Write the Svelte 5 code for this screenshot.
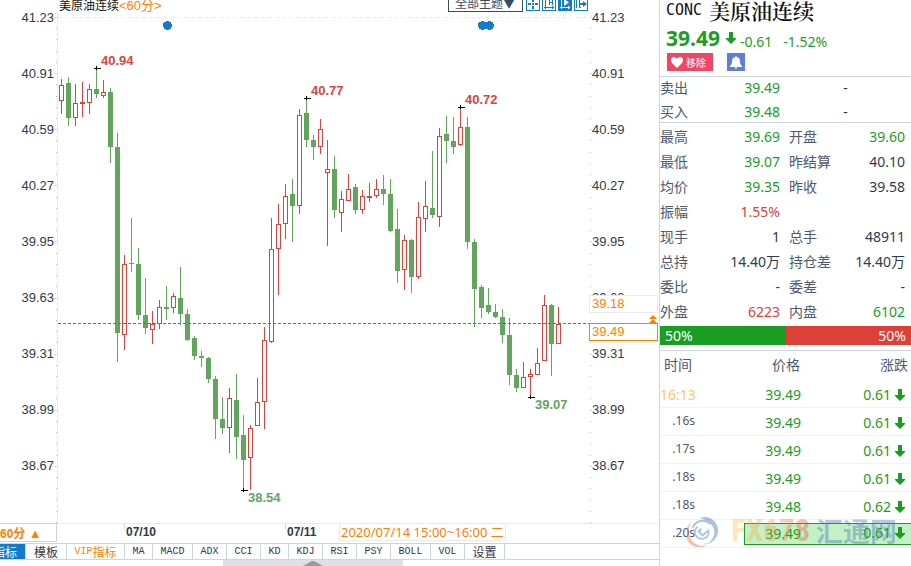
<script lang="ts">
/**
 * Futures quote screen: hourly candle chart on the left,
 * quote panel with the latest trades on the right.
 */

interface Mark {
  x: number;
  y: number;
  text: string;
  tx: number;
  ty: number;
  up: boolean;
}

const PRICES = ['41.23', '40.91', '40.59', '40.27', '39.95', '39.63', '39.31', '38.99', '38.67'];

// Chart space: x runs from 54 to 592, y from 12 to 523
const LEFT = 54;
const SPAN = 538;
const FIRST = 61;
const STEP = 7;

// [high, body top, body bottom, low, rising]
const CANDLES: number[][] = [
  [79, 85, 101, 114, 1], [77, 83, 118, 126, 0], [84, 103, 118, 126, 1], [82, 102, 104, 117, 1],
  [84, 89, 103, 114, 1], [68, 89, 94, 98, 0], [80, 92, 96, 98, 1], [88, 92, 147, 163, 0],
  [133, 147, 333, 362, 0], [255, 264, 335, 350, 1], [218, 263, 264, 272, 0], [248, 264, 315, 320, 0],
  [278, 315, 328, 334, 0], [311, 324, 330, 344, 1], [300, 307, 324, 329, 1], [286, 307, 309, 320, 0],
  [293, 296, 308, 313, 1], [267, 298, 314, 325, 0], [309, 314, 340, 341, 0], [336, 338, 356, 360, 0],
  [351, 356, 358, 367, 0], [357, 358, 379, 383, 0], [376, 379, 419, 439, 0], [397, 419, 428, 434, 0],
  [388, 398, 428, 453, 1], [374, 400, 437, 459, 0], [415, 435, 460, 490, 0], [425, 428, 458, 490, 1],
  [378, 402, 426, 426, 1], [327, 340, 402, 429, 1], [218, 249, 342, 343, 1], [204, 224, 249, 295, 1],
  [184, 196, 224, 239, 1], [179, 194, 206, 242, 0], [109, 115, 206, 214, 1], [98, 113, 140, 147, 0],
  [135, 140, 147, 160, 0], [119, 129, 147, 154, 1], [140, 169, 173, 246, 1], [156, 169, 210, 218, 0],
  [191, 199, 213, 232, 1], [174, 189, 201, 201, 1], [184, 187, 210, 214, 0], [190, 196, 210, 214, 1],
  [183, 196, 198, 202, 1], [179, 189, 196, 198, 1], [175, 189, 194, 205, 0], [179, 194, 231, 232, 0],
  [209, 229, 271, 283, 0], [235, 240, 270, 290, 1], [239, 240, 277, 293, 0], [202, 217, 277, 279, 1],
  [181, 206, 219, 232, 1], [151, 208, 215, 218, 0], [128, 136, 217, 227, 1], [116, 134, 141, 163, 0],
  [117, 141, 147, 154, 0], [107, 127, 145, 146, 1], [117, 127, 242, 249, 0], [239, 242, 289, 327, 0],
  [285, 287, 308, 318, 0], [288, 305, 312, 314, 0], [304, 312, 317, 318, 0], [309, 317, 335, 343, 0],
  [318, 335, 375, 385, 0], [369, 375, 388, 392, 0], [362, 377, 388, 388, 1], [369, 374, 377, 397, 1],
  [348, 363, 375, 375, 1], [295, 305, 361, 361, 1], [304, 305, 344, 376, 0], [307, 324, 344, 344, 1]
];

const MARKS: Mark[] = [
  { x: 96, y: 68, text: '40.94', tx: 101, ty: 65, up: true },
  { x: 306, y: 98, text: '40.77', tx: 311, ty: 95, up: true },
  { x: 460, y: 107, text: '40.72', tx: 465, ty: 104, up: true },
  { x: 243, y: 490, text: '38.54', tx: 248, ty: 502, up: false },
  { x: 530, y: 397, text: '39.07', tx: 535, ty: 409, up: false }
];

const NEWS = [167, 482, 489];

const DATES = [
  { x: 124, label: '07/10' },
  { x: 285, label: '07/11' }
];

const TABS = [
  { label: 'MA', w: 28 }, { label: 'MACD', w: 40 }, { label: 'ADX', w: 34 }, { label: 'CCI', w: 34 },
  { label: 'KD', w: 28 }, { label: 'KDJ', w: 34 }, { label: 'RSI', w: 34 }, { label: 'PSY', w: 34 },
  { label: 'BOLL', w: 40 }, { label: 'VOL', w: 34 }
];

const QUOTES = [
  ['最高', '39.69', 'down', '开盘', '39.60', 'down'],
  ['最低', '39.07', 'down', '昨结算', '40.10', ''],
  ['均价', '39.35', 'down', '昨收', '39.58', ''],
  ['振幅', '1.55%', 'up', '', '', ''],
  ['现手', '1', '', '总手', '48911', ''],
  ['总持', '14.40万', '', '持仓差', '14.40万', ''],
  ['委比', '-', '', '委差', '-', ''],
  ['外盘', '6223', 'up', '内盘', '6102', 'down']
];

const TRADES = [
  { time: '16:13', price: '39.49', change: '0.61' },
  { time: '.16s', price: '39.49', change: '0.61' },
  { time: '.17s', price: '39.49', change: '0.61' },
  { time: '.18s', price: '39.49', change: '0.61' },
  { time: '.18s', price: '39.48', change: '0.62' },
  { time: '.20s', price: '39.49', change: '0.61' }
];

const minorTicks = Array.from({ length: 46 }, (_, i) => Math.round(17 + i * 11.22));

let plotWidth = $state(SPAN);

// Spread the chart over whatever width the plot gets
const px = $derived((x: number) => Math.round(((x - LEFT) * plotWidth) / SPAN));
</script>

{#snippet downArrow()}
  <svg class="arrow" viewBox="0 0 10 12" aria-hidden="true">
    <path d="M3 0h4v6h3v1L5 12 0 7V6h3z" fill="#1a9d23" />
  </svg>
{/snippet}

<div class="screen">
  <main class="chart">
    <!-- Title and tools -->
    <header class="chart-head">
      <h1 class="chart-title">美原油连续<span>&lt;60分&gt;</span></h1>
      <select class="theme" aria-label="主题">
        <option>全部主题▼</option>
      </select>
      <div class="tools">
        <button type="button" aria-label="十字光标">
          <svg viewBox="0 0 12 12"><path d="M6 1v3M6 8v3M1 6h3M8 6h3M5 6h2" /></svg>
        </button>
        <button type="button" aria-label="缩放">
          <svg viewBox="0 0 12 12"><path class="thin" d="M2.500 1v10M1 9.500h10M6.500 1v6M9.500 1v6M6.500 4.500h3M9 8l2 1.500L9 11" /></svg>
        </button>
        <button type="button" class="on" aria-label="播放">
          <svg viewBox="0 0 12 12"><path class="thin" d="M2.500 1v10M1 9.500h10M9 8l2 1.500L9 11" /><path class="solid" d="M5 1l5 3.500L5 8z" /></svg>
        </button>
        <button type="button" aria-label="右移">
          <svg viewBox="0 0 12 12"><path class="thin" d="M1.500 1v9M6 1.500H4.500v8H6" /><path d="M4 6h5" /><path class="solid" d="M8 3l4 3-4 3z" /></svg>
        </button>
      </div>
    </header>

    <!-- Plot between its two price axes -->
    <div class="plot-row">
      <div class="axis axis-left">
        {#each PRICES as price}<span>{price}</span>{/each}
      </div>
      <div class="plot" bind:clientWidth={plotWidth}>
        <svg width={plotWidth} height="511" viewBox="0 12 {plotWidth} 511" shape-rendering="crispEdges">
          <rect x={px(57)} y="12" width="1" height="511" fill="#e6ebef" />
          {#each minorTicks as y, i}
            {#if i % 5 === 0 && i < 41}
              <rect x="0" {y} width="3" height="1" fill="#cbd5de" />
              <rect x={px(590)} {y} width="2" height="1" fill="#cbd5de" />
            {:else}
              <rect x="2" {y} width="1" height="1" fill="#b5bfca" />
              <rect x={px(590)} {y} width="1" height="1" fill="#b5bfca" />
            {/if}
          {/each}
          <line x1="4" y1="17.5" x2={px(588)} y2="17.5" stroke="#ececec" stroke-dasharray="4 3" />

          {#each NEWS as x}
            <circle cx={px(x) + 0.5} cy="25.500" r="4.500" fill="#137bc8" />
          {/each}

          {#each CANDLES as [high, top, bottom, low, rising], i}
            {@const cx = px(FIRST + i * STEP)}
            <rect x={cx} y={high} width="1" height={low - high} fill={rising ? '#d9453d' : '#62a55c'} />
            {#if rising}
              <rect x={cx - 1.5} y={top + 0.5} width="4" height={bottom - top - 1} fill="#fff" stroke="#d9453d" />
            {:else}
              <rect x={cx - 2} y={top} width="5" height={bottom - top} fill="#62a55c" />
            {/if}
          {/each}

          <line x1="4" y1="323.500" x2={px(589)} y2="323.500" stroke="#1d7fd6" stroke-dasharray="3 2" />

          {#each MARKS as m}
            <path d="M{px(m.x) - 2} {m.y + 0.5}h7M{px(m.x) + 0.5} {m.y - 2}v4" stroke="#000" />
            <text x={px(m.x) + m.tx - m.x} y={m.ty} class:rise={m.up}>{m.text}</text>
          {/each}
        </svg>
      </div>
      <div class="axis axis-right">
        {#each PRICES as price}<span>{price}</span>{/each}
        <output class="tag tag-cursor">39.18</output>
        <output class="tag tag-last">39.49</output>
        <svg class="tag-arrows" viewBox="0 0 8 8" aria-hidden="true">
          <path d="M4 0l4 4H0zM4 4l4 4H0z" fill="#ff7f00" />
        </svg>
      </div>
    </div>

    <!-- Time axis -->
    <div class="time-row">
      <button type="button" class="period">60分 <i>▲</i></button>
      <div class="dates">
        {#each DATES as d}
          <span class="date" style="left: {px(d.x) - 3}px">{d.label}</span>
        {/each}
        <span class="moment" style="left: {px(339) - 3}px">2020/07/14 15:00~16:00 二</span>
      </div>
    </div>

    <!-- Indicator tabs -->
    <nav class="tabs">
      <button type="button" class="active">指标</button>
      <button type="button" class="template">模板</button>
      <button type="button" class="vip"><small>VIP</small>指标</button>
      {#each TABS as tab}
        <button type="button" style="width: {tab.w}px"><small>{tab.label}</small></button>
      {/each}
      <button type="button" class="setup">设置</button>
    </nav>
    <div class="drawer">
      <button type="button" aria-label="展开">
        <svg viewBox="0 0 20 6"><path d="M0 6l7-4q3-2 6 0l7 4z" fill="#999" /></svg>
      </button>
    </div>
  </main>

  <aside class="panel">
    <section class="summary">
      <h2><span>CONC</span>美原油连续</h2>
      <p class="last">
        <strong>39.49</strong>
        {@render downArrow()}
        <span>-0.61</span>
        <span class="percent">-1.52%</span>
      </p>
      <div class="actions">
        <button type="button" class="remove">
          <svg viewBox="0 0 12 11"><path d="M6 11L1 6C-1 3 0 0 3 0c1.500 0 2.500 1 3 2 .5-1 1.500-2 3-2 3 0 4 3 2 6z" fill="#fff" /></svg>
          移除
        </button>
        <button type="button" class="alert" aria-label="提醒">
          <svg viewBox="0 0 12 13"><path d="M6 0l1 1c2.500.5 3 2.500 3 4.500 0 2 .5 3 2 4.500v1H0v-1c1.500-1.500 2-2.500 2-4.500C2 3.500 2.500 1.500 5 1zM4.500 11.500h3L6 13z" fill="#fff" /></svg>
        </button>
      </div>
    </section>

    <table class="quotes offers">
      <tbody>
        <tr><th scope="row">卖出</th><td class="down">39.49</td><td class="lot">-</td></tr>
        <tr><th scope="row">买入</th><td class="down">39.48</td><td class="lot">-</td></tr>
      </tbody>
    </table>

    <table class="quotes details">
      <tbody>
        {#each QUOTES as [labelA, a, toneA, labelB, b, toneB]}
          <tr>
            <th scope="row">{labelA}</th>
            <td class={toneA}>{a}</td>
            <th scope="row" class="second">{labelB}</th>
            <td class={toneB}>{b}</td>
          </tr>
        {/each}
      </tbody>
    </table>

    <div class="ratio">
      <span>50%</span>
      <span>50%</span>
    </div>

    <div class="trades-wrap">
      <table class="trades">
        <thead>
          <tr><th>时间</th><th>价格</th><th>涨跌</th></tr>
        </thead>
        <tbody>
          {#each TRADES as trade, i}
            <tr class:first={i === 0} class:latest={i === TRADES.length - 1}>
              <td><time>{trade.time}</time></td>
              <td><span>{trade.price}</span></td>
              <td><span>{trade.change}{@render downArrow()}</span></td>
            </tr>
          {/each}
        </tbody>
      </table>

      <div class="watermark" aria-hidden="true">
        <svg viewBox="0 0 32 32">
          <path d="M13 2a14 14 0 1 1 4 27 12 12 0 0 0 7-21Q19 3 13 2z" fill="#3568b8" />
          <path d="M5 6a14 14 0 0 0 16 24A15 15 0 0 1 5 6z" fill="#e8672c" />
          <path d="M6 12a11 11 0 0 1 18-4M11 11a7 7 0 1 0 11 4l-6 5-4-4 3-3" fill="none" stroke="#3568b8" stroke-width="2" />
        </svg>
        <b>FX678</b>
        <em>汇通网</em>
      </div>
    </div>
  </aside>
</div>

<style>
  :global(body) {
    margin: 0;
    background: #fff;
    overflow: hidden;
  }

  .screen {
    display: grid;
    grid-template-columns: minmax(0, 1fr) 252px;
    min-height: 100vh;
    box-sizing: border-box;
    color: #2f3a4c;
    font-family: "Noto Sans", "Noto Sans CJK SC", sans-serif;
    font-size: 14px;
  }

  button,
  select {
    box-sizing: border-box;
    margin: 0;
    padding: 0;
    border: 0;
    border-radius: 0;
    background: none;
    color: inherit;
    font: inherit;
  }

  .chart {
    display: flex;
    flex-direction: column;
  }

  /* ── Title and tools ── */
  .chart-head {
    display: flex;
    align-items: flex-end;
    height: 12px;
    padding: 0 71px 0 59px;
  }

  .chart-title {
    margin: 0 auto 0 0;
    color: #111;
    font: 12px/12px "Liberation Sans", "Noto Sans CJK SC", sans-serif;
  }

  .chart-title span {
    color: #ff7f00;
    font-size: 13px;
  }

  .theme {
    width: 75px;
    height: 18px;
    padding-left: 6px;
    border: 1px solid #3b4a63;
    appearance: none;
    color: #3b4a63;
    font: 12px/16px "Noto Sans CJK SC", sans-serif;
  }

  .tools {
    display: flex;
    gap: 2px;
    margin: 0 0 1px 3px;
  }

  .tools button {
    width: 14px;
    height: 14px;
    border: 1px solid #137bc8;
  }

  .tools svg {
    display: block;
    width: 12px;
    height: 12px;
  }

  .tools path {
    fill: none;
    stroke: #137bc8;
    stroke-width: 2;
  }

  .tools .thin {
    stroke-width: 1;
  }

  .tools .solid {
    fill: #137bc8;
    stroke: none;
  }

  .tools .on {
    background: #137bc8;
  }

  .tools .on path {
    stroke: #fff;
  }

  .tools .on .solid {
    fill: #fff;
    stroke: none;
  }

  /* ── Plot and price axes ── */
  .plot-row {
    display: grid;
    grid-template-columns: 54px minmax(0, 1fr) 67px;
    height: 511px;
  }

  .axis {
    display: flex;
    flex-direction: column;
    gap: 46px;
    padding-top: 1px;
    font: 13px/10px "Liberation Sans", sans-serif;
  }

  .axis-left {
    text-align: right;
  }

  .axis-right {
    position: relative;
  }

  .plot {
    overflow: hidden;
  }

  .plot svg {
    display: block;
  }

  .plot text {
    fill: #62a55c;
    font: bold 13px "Liberation Sans", sans-serif;
  }

  .plot .rise {
    fill: #d9453d;
  }

  .tag {
    position: absolute;
    left: -3px;
    right: 1px;
    box-sizing: border-box;
    height: 18px;
    padding-left: 2px;
    border: 1px solid #e6ebef;
    background: #fff;
    color: #ff7f00;
    line-height: 16px;
  }

  .tag-cursor {
    top: 283px;
  }

  .tag-last {
    top: 311px;
    border-color: #ff7f00;
  }

  .tag-arrows {
    position: absolute;
    top: 303px;
    right: 2px;
    width: 8px;
    height: 8px;
  }

  /* ── Time axis ── */
  .time-row {
    display: flex;
    height: 20px;
  }

  .period {
    width: 57px;
    height: 19px;
    border: solid #cbd5de;
    border-width: 1px 1px 1px 0;
    color: #ff7f00;
    font: bold 12px/20px "Liberation Sans", "Noto Sans CJK SC", sans-serif;
    text-align: left;
    white-space: nowrap;
  }

  .period i {
    font-size: 13px;
    font-style: normal;
    line-height: 16px;
  }

  .dates {
    position: relative;
    flex: 1;
    border-top: 1px solid #e6ebef;
  }

  .date,
  .moment {
    position: absolute;
    top: 0;
    white-space: nowrap;
  }

  .date {
    padding-left: 2px;
    font: bold 12px/16px "Liberation Sans", sans-serif;
  }

  .date::before {
    position: absolute;
    left: 0;
    width: 1px;
    height: 5px;
    background: #cbd5de;
    content: '';
  }

  .moment {
    padding: 0 1px;
    border: solid #e6ebef;
    border-width: 0 1px 1px;
    color: #ff7f00;
    font-size: 13px;
    line-height: 16px;
  }

  /* ── Indicator tabs ── */
  .tabs {
    display: flex;
    height: 17px;
    box-sizing: border-box;
    border: solid #cbd5de;
    border-width: 1px 0;
  }

  .tabs button {
    flex: none;
    border-right: 1px solid #cbd5de;
    font: 12px/14px "Noto Sans CJK SC", sans-serif;
    text-align: center;
    white-space: nowrap;
  }

  .tabs small {
    font: 10px/14px "Liberation Mono", monospace;
    vertical-align: top;
  }

  .tabs .active {
    width: 26px;
    padding-right: 8px;
    background: #137bc8;
    color: #fff;
    direction: rtl;
  }

  .tabs .template {
    width: 41px;
  }

  .tabs .setup {
    width: 40px;
  }

  .tabs .vip {
    width: 58px;
    color: #ff7f00;
  }

  .drawer {
    flex: 1;
    display: flex;
    padding-left: 223px;
  }

  .drawer button {
    width: 180px;
    height: 6px;
    background: #dfdfe5;
  }

  .drawer svg {
    display: block;
    width: 20px;
    height: 6px;
    margin: 0 auto;
  }

  /* ── Quote panel ── */
  .panel {
    border-left: 1px solid #cbd5de;
  }

  .arrow {
    width: 10px;
    height: 12px;
  }

  .summary {
    display: flex;
    flex-direction: column;
    height: 76px;
    padding-left: 6px;
    border-bottom: 1px solid #cbd5de;
  }

  .summary h2 {
    height: 22px;
    margin: 0;
    color: #111;
    font: 600 21px/20px "Noto Serif CJK SC", "Noto Sans CJK SC", serif;
  }

  .summary h2 span {
    margin-right: 7px;
    font: 15px/20px "DejaVu Sans Mono", monospace;
    vertical-align: top;
  }

  .last {
    display: flex;
    align-items: center;
    height: 31px;
    margin: 0;
    color: #1a9d23;
  }

  .last strong {
    margin-right: 6px;
    font-size: 21px;
  }

  .last span {
    margin-left: 4px;
    padding-top: 8px;
  }

  .last .percent {
    margin-left: 11px;
  }

  .actions {
    display: flex;
    gap: 14px;
    padding-left: 1px;
  }

  .remove,
  .alert {
    display: flex;
    align-items: center;
    justify-content: center;
    gap: 4px;
    height: 18px;
  }

  .remove {
    gap: 3px;
    width: 46px;
    padding-right: 3px;
    background: #ee4766;
    color: #fff;
    font-size: 10px;
  }

  .remove svg {
    width: 12px;
    height: 11px;
  }

  .alert {
    width: 18px;
    background: #5f7ed8;
  }

  .alert svg {
    width: 12px;
    height: 13px;
  }

  .quotes,
  .trades {
    width: 100%;
    border-collapse: collapse;
    table-layout: fixed;
  }

  .quotes th,
  .quotes td {
    height: 25px;
    padding: 0;
    line-height: 20px;
    text-align: right;
    white-space: nowrap;
  }

  .quotes th {
    width: 50px;
    color: #4d5970;
    font-weight: 400;
    text-align: left;
  }

  .quotes td {
    width: 70px;
  }

  .offers {
    border-bottom: 1px solid #cbd5de;
  }

  .offers tr:first-child > * {
    height: 22px;
  }

  .offers tr:last-child > * {
    height: 23px;
    vertical-align: bottom;
  }

  .quotes .lot {
    width: auto;
    text-align: center;
  }

  .quotes .second {
    width: 51px;
    padding-left: 9px;
  }

  .details {
    margin-top: 1px;
  }

  .details td:last-child {
    width: auto;
    padding-right: 6px;
  }

  .quotes .down {
    color: #1a9d23;
  }

  .quotes .up {
    color: #dd4038;
  }

  .ratio {
    display: flex;
    margin-top: 2px;
    color: #fff;
    line-height: 19px;
  }

  .ratio span {
    flex: 1;
    padding: 0 5px;
    background: #1a9d23;
  }

  .ratio span:last-child {
    background: #dd4038;
    text-align: right;
  }

  /* ── Trades ── */
  .trades-wrap {
    position: relative;
    margin-top: 5px;
    border-top: 1px solid #cbd5de;
  }

  .trades th,
  .trades td {
    box-sizing: border-box;
    height: 28px;
    padding: 0;
    line-height: 20px;
  }

  .trades th {
    width: 84px;
    color: #4d5970;
    font-weight: 400;
    text-align: center;
  }

  .trades th:first-child {
    padding-left: 4px;
    text-align: left;
  }

  .trades th:last-child {
    width: auto;
    padding-right: 3px;
    text-align: right;
  }

  .trades tbody tr {
    border-bottom: 1px solid #f0f2f4;
  }

  .trades td {
    color: #1a9d23;
    text-align: right;
    vertical-align: bottom;
  }

  .trades td > span {
    display: block;
    padding-right: 27px;
    padding-bottom: 2px;
    line-height: 20px;
  }

  .trades td:last-child > span {
    display: flex;
    align-items: center;
    justify-content: flex-end;
    gap: 4px;
    padding-right: 6px;
  }

  .trades td:first-child {
    padding-right: 49px;
    color: #4d5970;
    font-size: 12px;
    vertical-align: middle;
  }

  .trades .first td:first-child {
    padding-bottom: 2px;
    color: #ffc65c;
    font-size: 14px;
    vertical-align: bottom;
  }

  .latest td > span {
    box-sizing: border-box;
    height: 22px;
    margin-bottom: 2px;
    border: solid #1a9d23;
    border-width: 1px 0;
    background: #c3f0c5;
  }

  .latest td:nth-child(2) > span {
    border-left-width: 1px;
  }

  .watermark {
    position: absolute;
    top: 164px;
    left: 27px;
    display: flex;
    align-items: center;
    height: 32px;
    opacity: 0.4;
    pointer-events: none;
  }

  .watermark svg {
    width: 31px;
    height: 31px;
    margin-right: 13px;
  }

  .watermark b {
    margin-right: 6px;
    background: linear-gradient(90deg, #ffc94a, #f5a05c 50%, #e85a3c);
    background-clip: text;
    color: transparent;
    font: bold 31px/32px "Liberation Sans Narrow", "Roboto Condensed", sans-serif;
  }

  .watermark em {
    color: #4a78c0;
    font: bold 27px/32px "Noto Sans CJK SC", sans-serif;
  }
</style>
